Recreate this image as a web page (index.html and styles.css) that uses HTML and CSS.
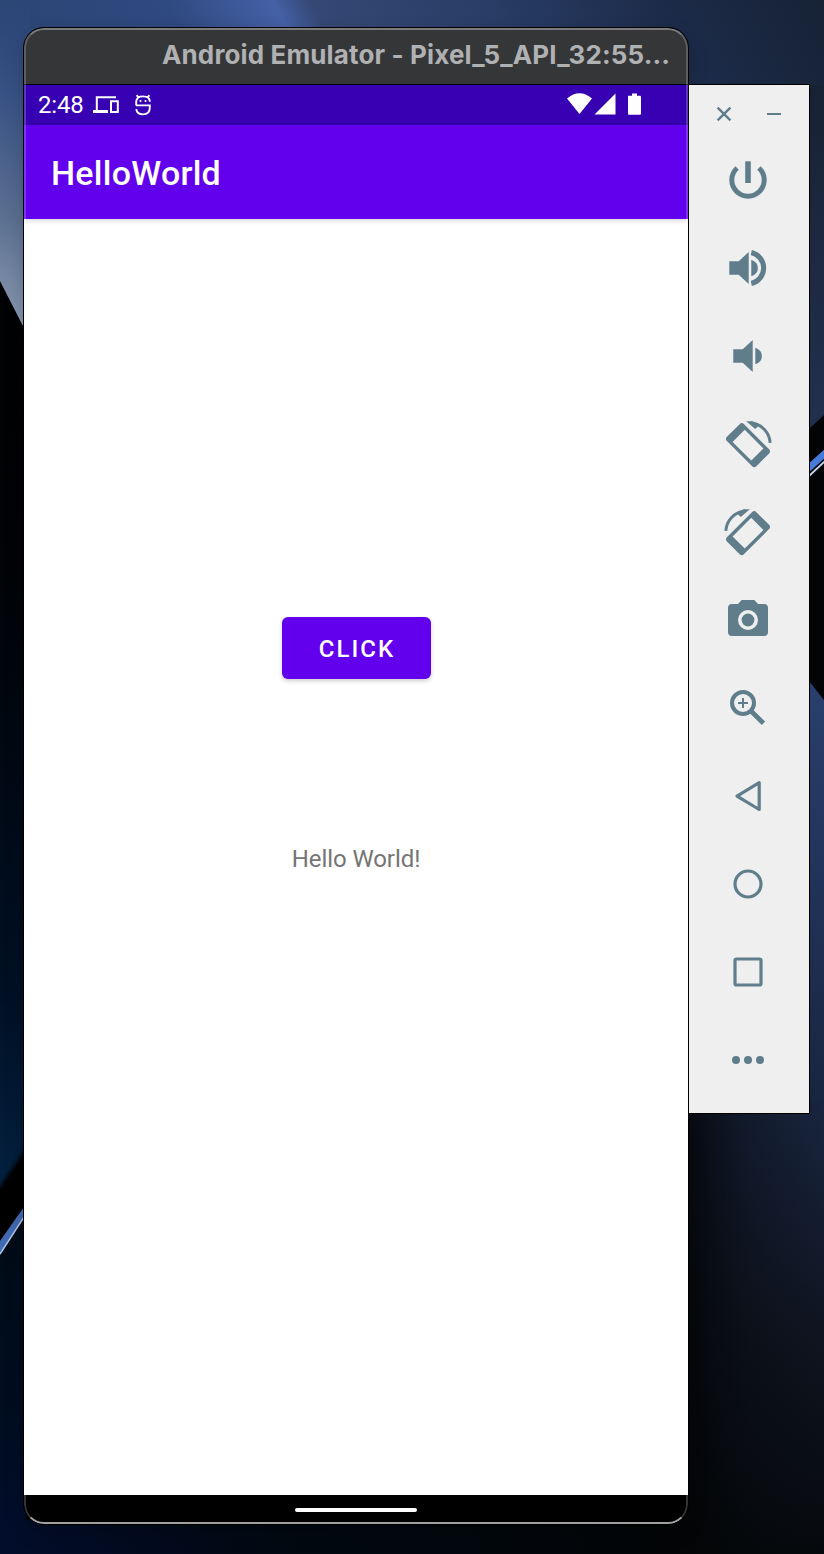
FILE: index.html
```html
<!DOCTYPE html>
<html lang="en">
<head>
<meta charset="utf-8">
<title>Android Emulator</title>
<link rel="stylesheet" href="styles.css">
</head>
<body>
<svg class="wallpaper" viewBox="0 0 824 1554" aria-hidden="true">
  <defs>
    <linearGradient id="top" gradientUnits="userSpaceOnUse" x1="0" y1="0" x2="824" y2="0" gradientTransform="skewX(28)"><stop offset="0" stop-color="#2c4575"/><stop offset=".2" stop-color="#2f4a80"/><stop offset=".33" stop-color="#4561a6"/><stop offset=".375" stop-color="#354876"/><stop offset=".6" stop-color="#283c64"/><stop offset=".8" stop-color="#1c2b49"/><stop offset="1" stop-color="#172235"/></linearGradient>
    <linearGradient id="leftTop" x1="0" y1="0" x2="0" y2="1"><stop offset="0" stop-color="#334f84" stop-opacity="0"/><stop offset=".3" stop-color="#3a5386"/><stop offset=".65" stop-color="#5a6f91"/><stop offset="1" stop-color="#8c9bb3"/></linearGradient>
    <linearGradient id="leftMid" x1="0" y1="0" x2="0" y2="1"><stop offset="0" stop-color="#010203"/><stop offset=".3" stop-color="#010306"/><stop offset=".75" stop-color="#011024"/><stop offset="1" stop-color="#042447"/></linearGradient>
    <linearGradient id="leftLow" x1="0" y1="0" x2="0" y2="1"><stop offset="0" stop-color="#010b16"/><stop offset=".6" stop-color="#010d20"/><stop offset="1" stop-color="#020d2e"/></linearGradient>
    <linearGradient id="rightTop" x1="0" y1="0" x2="0" y2="1"><stop offset="0" stop-color="#172233"/><stop offset="1" stop-color="#22304d"/></linearGradient>
    <linearGradient id="rightLow" x1="0" y1="0" x2="0" y2="1"><stop offset="0" stop-color="#2a3f6d"/><stop offset=".3" stop-color="#1f2f52"/><stop offset=".52" stop-color="#17233a"/><stop offset=".75" stop-color="#0f1420"/><stop offset="1" stop-color="#06090c"/></linearGradient>
    <linearGradient id="lowShade"><stop offset="0" stop-color="#020304" stop-opacity=".8"/><stop offset=".45" stop-color="#030507" stop-opacity=".3"/><stop offset="1" stop-color="#05080c" stop-opacity="0"/></linearGradient>
    <linearGradient id="bottom"><stop offset="0" stop-color="#020d2b"/><stop offset=".4" stop-color="#020912"/><stop offset="1" stop-color="#030506"/></linearGradient>
    <filter id="soft"><feGaussianBlur stdDeviation="2"/></filter>
  </defs>
  <rect width="824" height="1554" fill="#020406"/>
  <rect width="824" height="120" fill="url(#top)"/>
  <rect width="30" height="330" fill="url(#leftTop)"/>
  <path d="M0 281 26 332V1180L0 1230Z" fill="url(#leftMid)"/>
  <path d="M-5 1194 30 1142V1217L-5 1262Z" fill="#000" filter="url(#soft)"/>
  <path d="M0 1241 26 1204V1213L0 1256Z" fill="#416ab4"/>
  <path d="M0 1255 26 1214V1554H0Z" fill="url(#leftLow)"/>
  <path d="M0 1254 26 1214" stroke="#b0c8e8" stroke-width="1.4"/>
  <path d="M685 85H824V415L810 428H685Z" fill="url(#rightTop)"/>
  <path d="M806 466 826 448V457L806 475Z" fill="#477bdb"/>
  <path d="M808 477 826 460" stroke="#c5d8f0" stroke-width="1.8"/>
  <path d="M685 681H809L824 700V1554H685Z" fill="url(#rightLow)"/>
  <rect x="685" y="1100" width="139" height="454" fill="url(#lowShade)"/>
  <path d="M0 1520H690V1554H0Z" fill="url(#bottom)"/>
</svg>
<main class="desktop">
  <section class="phone">
    <header class="titlebar">Android Emulator - Pixel_5_API_32:55...</header>
    <div class="statusbar">
      <span class="clock">2:48</span>
      <svg class="devices" viewBox="0 0 26 18"><path d="M3.8 14V1.2H23" fill="none" stroke="#fff" stroke-width="2"/><path d="M0 14H15V17H0Z" fill="#fff"/><path d="M18 5.2H24.8V16H18Z" fill="none" stroke="#fff" stroke-width="2"/></svg>
      <svg class="debug" viewBox="0 0 16 22"><path d="M1.2 7.8C1.2 4 4 2.4 8 2.4S14.8 4 14.8 7.8M1 11.4H14.8V13.5C14.8 18 12 20.4 8 20.4S1.6 18 1.3 15.2M1.2 11.4V7.5M3.6 3.6 1.6 1.2M12.4 3.6 14.4 1.2" fill="none" stroke="#fff" stroke-width="1.9"/><circle cx="5.5" cy="7" r="1.1" fill="#fff"/><circle cx="10.5" cy="7" r="1.1" fill="#fff"/></svg>
      <svg class="signals" viewBox="0 0 74 22"><path d="M0 5.5Q12.5-5 25 5.5L12.5 21ZM27.5 21.5H48.5V.5ZM61 2.8H65V.5H70V2.8H73Q74 2.8 74 3.8V20.5Q74 21.7 73 21.7H62Q61 21.7 61 20.5Z" fill="#fff"/></svg>
    </div>
    <div class="appbar">HelloWorld</div>
    <div class="content">
      <button class="click">CLICK</button>
      <p class="message">Hello World!</p>
    </div>
    <footer class="navbar"><span class="handle"></span></footer>
  </section>
  <aside class="toolbar">
    <div class="window-actions">
      <svg viewBox="-8 -8 16 16"><path d="M-6.4-6.4 6.4 6.4M6.4-6.4-6.4 6.4" stroke-width="2.4"/></svg>
      <svg viewBox="-8 -8 16 16"><path d="M-7 0H7" stroke-width="2"/></svg>
    </div>
    <div class="tool"><svg viewBox="-24 -24 48 48"><path d="M0-18.7V3" stroke-width="5.6"/><path d="M-10.9-12A16.2 16.2 0 1 0 10.9-12" stroke-width="5"/></svg></div>
    <div class="tool"><svg viewBox="-24 -24 48 48"><path class="fill" d="M-18.7-6.7H-9.3L.7-16V16L-9.3 6.7H-18.7ZM3.3-8.3Q9.9-6 9.9 0T3.3 8.3Z"/><path d="M3.3-15.5A15.9 15.9 0 0 1 3.3 15.5" stroke-width="5"/></svg></div>
    <div class="tool"><svg viewBox="-24 -24 48 48"><path class="fill" d="M-14.7-6.7H-5.3L4.7-16V16L-5.3 6.7H-14.7ZM7.3-8.3Q13.9-6 13.9 0T7.3 8.3Z"/></svg></div>
    <div class="tool"><svg viewBox="-24 -24 48 48"><g id="rotate"><path class="fill" fill-rule="evenodd" transform="translate(0 1.2) rotate(45)" d="M-17.5-12H17.5Q20.8-12 20.8-9V9Q20.8 12 17.5 12H-17.5Q-20.8 12-20.8 9V-9Q-20.8-12-17.5-12ZM-13.2-8.6V8.6H13.2V-8.6Z"/><path d="M22.2-1.2C21.4-11.5 14-19.7 3-21.2" stroke-width="2.9"/><path class="fill" d="M-1.8-22.7H4L11-18.4 7.2-15Z"/></g></svg></div>
    <div class="tool"><svg viewBox="-24 -24 48 48"><use href="#rotate" transform="scale(-1 1)"/></svg></div>
    <div class="tool"><svg viewBox="-24 -24 48 48"><path class="fill" fill-rule="evenodd" d="M-6.3-20H6.3L10-16H16Q20-16 20-12V12Q20 16 16 16H-16Q-20 16-20 12V-12Q-20-16-16-16H-10ZM0-10A10 10 0 1 0 0 10 10 10 0 1 0 0-10Z"/><circle class="fill" r="6.4"/></svg></div>
    <div class="tool"><svg viewBox="-24 -24 48 48"><circle cx="-5" cy="-5" r="11" stroke-width="4"/><path d="M-10-5H0M-5-10V0" stroke-width="2"/><path d="M3.5 3.5 15.5 15.3" stroke-width="4.8"/></svg></div>
    <div class="tool"><svg viewBox="-24 -24 48 48"><path d="M-11 .1 11.2-13.3V13.5Z" stroke-width="3.2" stroke-linejoin="round"/></svg></div>
    <div class="tool"><svg viewBox="-24 -24 48 48"><circle r="13" stroke-width="3.2"/></svg></div>
    <div class="tool"><svg viewBox="-24 -24 48 48"><rect x="-13" y="-13" width="26" height="26" rx="1.5" stroke-width="3.2"/></svg></div>
    <div class="tool"><svg viewBox="-24 -24 48 48"><circle class="fill" cx="-12" r="4"/><circle class="fill" r="4"/><circle class="fill" cx="12" r="4"/></svg></div>
  </aside>
</main>
</body>
</html>
```
FILE: styles.css
```css
* { box-sizing: border-box; }
body { margin: 0; height: 1554px; overflow: hidden; }
.wallpaper { position: absolute; inset: 0; width: 824px; height: 1554px; z-index: -2; }
.desktop { display: flex; align-items: flex-start; padding: 28px 0 0 24px; }
.phone {
  position: relative;
  display: flex; flex-direction: column;
  width: 664px; height: 1496px;
  border-radius: 20px;
  overflow: hidden;
  background: #000;
  font-family: Roboto, sans-serif;
}
.desktop::before {
  content: "";
  position: absolute; left: 23px; top: 27px;
  width: 666px; height: 1498px;
  border-radius: 21px;
  background: #000;
  box-shadow: 0 8px 20px rgba(0, 0, 0, .2);
  z-index: -1;
}
.phone::before, .phone::after {
  content: "";
  position: absolute; left: 0; right: 0;
  border: 2px solid rgba(255, 255, 255, .2);
  pointer-events: none;
  z-index: 1;
}
.phone::before { top: 0; height: 191px; border-bottom: 0; border-top-color: rgba(255, 255, 255, .35); border-radius: 20px 20px 0 0; }
.phone::after { bottom: 0; height: 29px; border-top: 0; border-bottom-color: #a0a0a0; border-radius: 0 0 20px 20px; }
.titlebar {
  height: 57px; padding-left: 138px;
  border-bottom: 1px solid #000;
  background: #353638; color: #b0b1b3;
  font: 700 26px/54px Inter, sans-serif;
  letter-spacing: .13px;
  white-space: nowrap;
}
.statusbar {
  display: flex; align-items: center;
  height: 40px; padding: 0 47px 0 14px;
  background: #3700b3; color: #fff;
}
.clock { width: 55px; font-size: 24px; line-height: 40px; letter-spacing: -.2px; }
.devices { width: 26px; height: 18px; }
.debug { width: 16px; height: 22px; margin-left: 16px; }
.signals { width: 74px; height: 22px; margin: 0 0 2px auto; }
.appbar {
  height: 94px; padding-left: 27px;
  background: #6200ee; color: #fff;
  font-size: 34px; font-weight: 500; line-height: 97px;
  letter-spacing: .25px;
  box-shadow: 0 1px 6px rgba(0, 0, 0, .2);
  z-index: 0;
}
.content {
  display: flex; flex-direction: column; align-items: center;
  height: 1276px; padding-top: 398px;
  background: #fff;
}
.click {
  width: 149px; height: 62px; padding: 2px 0 0 2px;
  border: 0; border-radius: 6px;
  background: #6200ee; color: #fff;
  font: 500 24px/60px Roboto, sans-serif;
  letter-spacing: 2px;
  box-shadow: 0 2px 4px rgba(0, 0, 0, .2);
}
.message { margin: 164px 0 0; color: #757575; font-size: 24px; line-height: 32px; letter-spacing: -.08px; }
.navbar { display: flex; justify-content: center; height: 29px; padding-top: 13px; background: #000; }
.handle { width: 122px; height: 4px; border-radius: 2px; background: #fff; }
.toolbar { flex: none; width: 122px; height: 1030px; margin-top: 56px; border: 1px solid #000; background: #efefef; }
.toolbar svg { display: block; fill: none; stroke: #607d8b; overflow: visible; }
.toolbar .fill { fill: #607d8b; stroke: none; }
.window-actions { display: flex; gap: 34px; height: 51px; padding: 21px 0 0 27px; }
.window-actions svg { width: 16px; height: 16px; }
.tool { display: flex; align-items: center; justify-content: center; height: 88px; padding-right: 2px; }
.tool svg { width: 48px; height: 48px; }
```
